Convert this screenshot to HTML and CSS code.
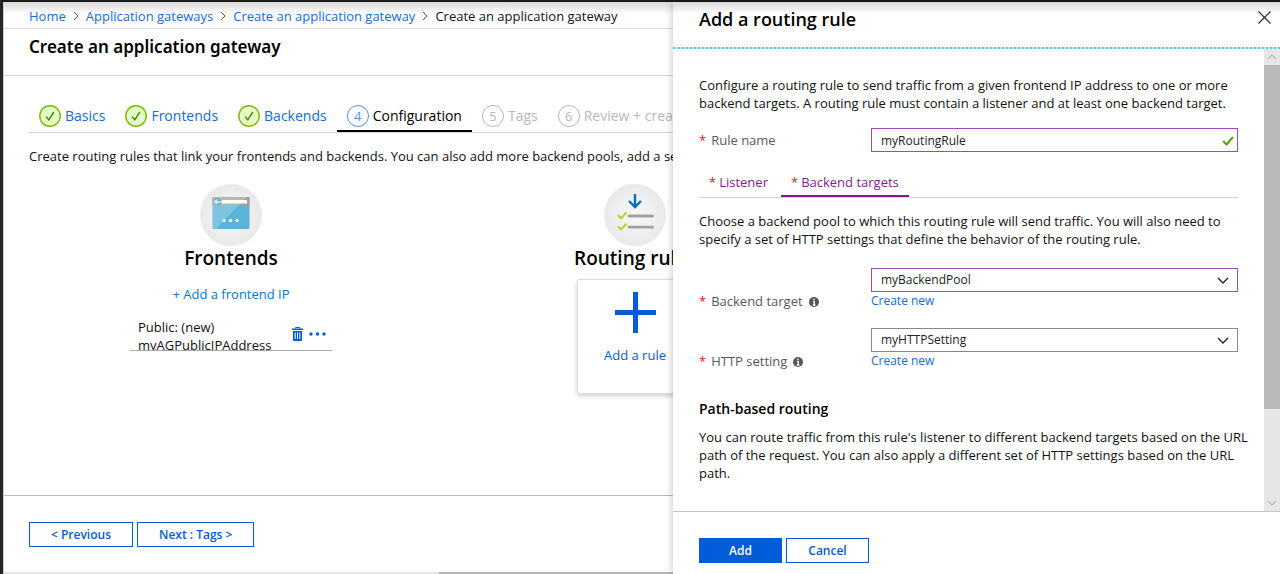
FILE: index.html
```html
<!DOCTYPE html>
<html lang="en">
<head>
<meta charset="utf-8">
<title>Create an application gateway</title>
<link rel="stylesheet" href="styles.css">
</head>
<body>
<div class="portal">
  <main class="blade">
    <nav class="breadcrumb" aria-label="Breadcrumb">
      <a href="#">Home</a>
      <svg class="crumb-sep" viewBox="0 0 6 10"><path d="M1 1l4 4-4 4"/></svg>
      <a href="#">Application gateways</a>
      <svg class="crumb-sep" viewBox="0 0 6 10"><path d="M1 1l4 4-4 4"/></svg>
      <a href="#">Create an application gateway</a>
      <svg class="crumb-sep" viewBox="0 0 6 10"><path d="M1 1l4 4-4 4"/></svg>
      <span>Create an application gateway</span>
    </nav>
    <header class="blade-header"><h1>Create an application gateway</h1></header>

    <div class="blade-body">
      <div class="steps">
        <a class="step done" href="#"><svg class="step-icon" viewBox="0 0 22 22"><circle cx="11" cy="11" r="10.2"/><path d="M7 11.6l2.8 3.2L14.8 7"/></svg>Basics</a>
        <a class="step done" href="#"><svg class="step-icon" viewBox="0 0 22 22"><circle cx="11" cy="11" r="10.2"/><path d="M7 11.6l2.8 3.2L14.8 7"/></svg>Frontends</a>
        <a class="step done" href="#"><svg class="step-icon" viewBox="0 0 22 22"><circle cx="11" cy="11" r="10.2"/><path d="M7 11.6l2.8 3.2L14.8 7"/></svg>Backends</a>
        <a class="step active" href="#"><span class="step-num">4</span>Configuration</a>
        <a class="step later" href="#"><span class="step-num">5</span>Tags</a>
        <a class="step later" href="#"><span class="step-num">6</span>Review + create</a>
      </div>
      <p class="intro">Create routing rules that link your frontends and backends. You can also add more backend pools, add a second</p>

      <div class="columns">
        <section class="column">
          <svg class="column-icon" viewBox="0 0 62 62">
            <defs><radialGradient id="disc"><stop offset="0" stop-color="#f8f8f8"/><stop offset="1" stop-color="#e9e9e9"/></radialGradient></defs>
            <circle cx="31" cy="31" r="31" fill="url(#disc)"/>
            <rect x="12.500" y="13" width="37" height="32" rx="1" fill="#59b4d9"/>
            <path d="M12.500 14q0-1 1-1h35q1 0 1 1v8h-37z" fill="#a0a1a2"/>
            <path d="M12.500 14q0-1 1-1h33L16 45h-2.500q-1 0-1-1z" fill="#fff" opacity=".22"/>
            <rect x="21.500" y="16" width="25.500" height="3.500" fill="#fff"/>
            <circle cx="17.500" cy="17.800" r="3.600" fill="#59b4d9"/>
            <path d="M20.500 17.800h-5.500M17 15.600l-2.200 2.200 2.200 2.200" fill="none" stroke="#fff" stroke-width="1.200"/>
            <circle cx="24" cy="36.500" r="1.600" fill="#fff"/><circle cx="30.500" cy="36.500" r="1.600" fill="#fff"/><circle cx="37" cy="36.500" r="1.600" fill="#fff"/>
          </svg>
          <h2>Frontends</h2>
          <a class="add-link" href="#">+ Add a frontend IP</a>
          <div class="item">
            <div class="item-name">Public: (new)<br>myAGPublicIPAddress</div>
            <button class="icon-button" type="button" aria-label="Delete">
              <svg width="11" height="14" viewBox="0 0 11 14"><path d="M3.500 1.500V.5h4v1" fill="none" stroke="#015cda"/><path d="M0 1.500h11v1.500H0zM1 4h9v9q0 1-1 1H2q-1 0-1-1z" fill="#015cda"/><path d="M3.200 5.500v6.500M5.500 5.500v6.500M7.800 5.500v6.500" stroke="#fff"/></svg>
            </button>
            <button class="icon-button" type="button" aria-label="More">
              <svg width="17" height="4" viewBox="0 0 17 4" fill="#015cda"><circle cx="2" cy="2" r="1.700"/><circle cx="8.500" cy="2" r="1.700"/><circle cx="15" cy="2" r="1.700"/></svg>
            </button>
          </div>
        </section>
        <section class="column">
          <svg class="column-icon" viewBox="0 0 62 62">
            <circle cx="31" cy="31" r="31" fill="url(#disc)"/>
            <path d="M31 10v13M25 17l6 6 6-6" fill="none" stroke="#0072c6" stroke-width="2.400"/>
            <path d="M25 32h23.500M25 43.200h23.500" stroke="#a0a1a2" stroke-width="2.800" stroke-linecap="round"/>
            <path d="M14 31l3 3.200 5.500-5.700M14 42.200l3 3.200 5.500-5.700" fill="none" stroke="#b8d432" stroke-width="2"/>
          </svg>
          <h2>Routing rules</h2>
          <button class="rule-card" type="button">
            <svg width="41" height="41" viewBox="0 0 41 41"><path d="M20.500 0v41M0 20.500h41" stroke="#015cda" stroke-width="5"/></svg>
            Add a rule
          </button>
        </section>
      </div>
    </div>

    <footer class="blade-footer">
      <button class="button" type="button">&lt; Previous</button>
      <button class="button" type="button">Next : Tags &gt;</button>
    </footer>
    <div class="hscroll"><div class="hscroll-thumb"></div></div>
  </main>

  <aside class="panel">
    <header class="panel-header">
      <h2>Add a routing rule</h2>
      <button class="icon-button" type="button" aria-label="Close"><svg width="13" height="13" viewBox="0 0 13 13"><path d="M.5.5l12 12M12.500.5l-12 12" stroke="#333" stroke-width="1.200"/></svg></button>
    </header>
    <div class="panel-scroll">
      <form class="panel-body">
        <p>Configure a routing rule to send traffic from a given frontend IP address to one or more backend targets. A routing rule must contain a listener and at least one backend target.</p>
        <div class="field name-field">
          <label for="rule-name"><span class="req">*</span>Rule name</label>
          <div class="control">
            <input id="rule-name" class="box changed" type="text" value="myRoutingRule">
            <svg class="valid" viewBox="0 0 12 10"><path d="M1 5l3.500 3.500L11 1"/></svg>
          </div>
        </div>
        <div class="tabs">
          <button class="tab" type="button"><span class="req">*</span>Listener</button>
          <button class="tab selected" type="button"><span class="req">*</span>Backend targets</button>
        </div>
        <p>Choose a backend pool to which this routing rule will send traffic. You will also need to specify a set of HTTP settings that define the behavior of the routing rule.</p>
        <div class="field first-select">
          <label for="target"><span class="req">*</span>Backend target<svg class="info" viewBox="0 0 10 10"><circle cx="5" cy="5" r="5"/><path d="M5 1.500v1.500M4 4.500h1.200v3.500M3.800 8h2.600"/></svg></label>
          <div class="control">
            <select id="target" class="box changed"><option>myBackendPool</option></select>
            <svg class="chevron" viewBox="0 0 12 7"><path d="M1 1l5 5 5-5"/></svg>
            <a href="#">Create new</a>
          </div>
        </div>
        <div class="field">
          <label for="setting"><span class="req">*</span>HTTP setting<svg class="info" viewBox="0 0 10 10"><circle cx="5" cy="5" r="5"/><path d="M5 1.500v1.500M4 4.500h1.200v3.500M3.800 8h2.600"/></svg></label>
          <div class="control">
            <select id="setting" class="box"><option>myHTTPSetting</option></select>
            <svg class="chevron" viewBox="0 0 12 7"><path d="M1 1l5 5 5-5"/></svg>
            <a href="#">Create new</a>
          </div>
        </div>
        <h3>Path-based routing</h3>
        <p>You can route traffic from this rule's listener to different backend targets based on the URL path of the request. You can also apply a different set of HTTP settings based on the URL path.</p>
      </form>
      <div class="vscroll">
        <svg class="vscroll-arrow up" viewBox="0 0 16 16"><path d="M4 10l4-4 4 4"/></svg>
        <div class="vscroll-thumb"></div>
        <svg class="vscroll-arrow" viewBox="0 0 16 16"><path d="M4 6l4 4 4-4"/></svg>
      </div>
    </div>
    <footer class="panel-footer">
      <button class="button primary" type="button">Add</button>
      <button class="button" type="button">Cancel</button>
    </footer>
  </aside>
</div>
</body>
</html>
```
FILE: styles.css
```css
* { box-sizing: border-box; }
body {
  margin: 0;
  font: 13px/18px "Open Sans", "Noto Sans", sans-serif;
  color: #111;
  background: #fff;
}
h1, h2, h3, p { margin: 0; font-weight: 600; }
p { font-weight: 400; }
a { color: #136bdd; text-decoration: none; }
button, input, select { font: inherit; color: inherit; }
button { cursor: pointer; }
.portal {
  display: flex;
  height: 100vh;
  border-top: 2px solid #1b1a19;
  border-left: 3px solid #252423;
}

.blade {
  flex: 1;
  min-width: 0;
  display: flex;
  flex-direction: column;
  overflow: hidden;
  white-space: nowrap;
  border-left: 1px solid #ccc;
}
.breadcrumb {
  display: flex;
  align-items: center;
  gap: 7px;
  height: 27px;
  padding: 2px 0 0 25px;
  border-bottom: 1px solid #ddd;
  background: linear-gradient(#d8d8d8, #fff 12px);
}
.crumb-sep { width: 6px; height: 10px; fill: none; stroke: #555; flex: none; }
.blade-header {
  height: 47px;
  padding: 6px 25px;
  border-bottom: 1px solid #d4d4d4;
}
h1 { font-family: "Noto Sans", sans-serif; font-size: 17px; line-height: 24px; color: #000; }
.blade-body { flex: 1; padding: 22px 0 0 25px; min-height: 0; }
.steps {
  display: flex;
  height: 35px;
  border-bottom: 1px solid #d4d4d4;
}
.step {
  display: flex;
  align-items: center;
  gap: 4px;
  padding: 3px 10px 0;
  height: 34px;
  border-bottom: 2px solid transparent;
  font-size: 14px;
}
.step-icon, .step-num { width: 22px; height: 22px; flex: none; }
.step-icon circle { fill: #e4ffc7; stroke: #7fba00; stroke-width: 1.400; }
.step-icon path { fill: none; stroke: #498205; stroke-width: 1.400; }
.step-num {
  border: 1px solid;
  border-radius: 50%;
  text-align: center;
  line-height: 20px;
  font-size: 13px;
}
.step.active { color: #000; border-color: #000; }
.step.active .step-num { color: #4b92f7; }
.step.later { color: #b8b8b8; }
.intro { margin-top: 14px; }
.columns {
  display: grid;
  grid-template-columns: repeat(2, 404px);
  margin-top: 19px;
}
.column { display: flex; flex-direction: column; align-items: center; }
.column-icon { width: 62px; height: 62px; }
.column h2 { font-size: 19px; line-height: 24px; color: #000; }
.add-link { margin-top: 15px; color: #0078d4; }
.item {
  display: flex;
  align-items: center;
  gap: 6px;
  width: 202px;
  height: 33px;
  margin-top: 15px;
  padding: 0 6px 0 8px;
  border-bottom: 1px solid #aaa;
  overflow: hidden;
}
.item-name { flex: 1; align-self: flex-start; }
.icon-button { display: flex; padding: 0; border: 0; background: none; }
.rule-card {
  display: flex;
  flex-direction: column;
  align-items: center;
  gap: 13px;
  width: 117px;
  height: 115px;
  margin-top: 9px;
  padding: 12px 0 0;
  border: 1px solid #ddd;
  border-radius: 3px;
  background: #fff;
  box-shadow: 0 2px 5px rgba(0, 0, 0, .2);
  color: #015cda;
}
.blade-footer {
  display: flex;
  align-items: flex-start;
  gap: 4px;
  height: 77px;
  padding: 26px 25px 0;
  border-top: 1px solid #bbb;
}
.button {
  height: 25px;
  min-width: 83px;
  padding: 0 21px;
  border: 1px solid #015cda;
  background: #fff;
  color: #015cda;
  font-size: 12px;
  font-weight: 600;
}
.button.primary { background: #015cda; color: #fff; }
.hscroll { height: 2px; background: #e4e4e4; }
.hscroll-thumb { width: 35%; height: 2px; margin-left: auto; background: #b5b5b5; }

.panel {
  flex: none;
  width: 607px;
  display: flex;
  flex-direction: column;
  background: #fff;
  box-shadow: 0 0 8px rgba(0, 0, 0, .25);
}
.panel-header {
  display: flex;
  justify-content: space-between;
  align-items: flex-start;
  height: 47px;
  padding: 5px 9px 0 26px;
  border-bottom: 2px dotted #4fd0f7;
  background: linear-gradient(#d8d8d8, #fff 12px);
}
.panel-header h2 { font-size: 18px; line-height: 24px; color: #000; }
.panel-header .icon-button { margin-top: 4px; }
.panel-scroll { flex: 1; min-height: 0; display: flex; }
.panel-body { flex: 1; padding: 27px 26px 0; }
.panel-body p { margin-right: -12px; }
.field { display: flex; margin-top: 18px; }
.first-select { margin-top: 20px; }
.field label { display: flex; align-items: center; width: 172px; height: 18px; margin-top: 24px; color: #595959; }
.req { color: #e81123; margin-right: 5px; }
.control { position: relative; flex: 1; display: flex; flex-direction: column; font-size: 12px; }
.box {
  width: 100%;
  height: 24px;
  padding: 0 9px;
  border: 1px solid #8a8886;
  border-radius: 0;
  appearance: none;
  background: #fff;
  color: #222;
}
.changed { border-color: #a04bb5; }
.valid { position: absolute; right: 4px; top: 8px; width: 12px; height: 10px; fill: none; stroke: #57a300; stroke-width: 2; }
.chevron { position: absolute; right: 9px; top: 9px; width: 12px; height: 7px; fill: none; stroke: #222; stroke-width: 1.400; }
.info { width: 10px; height: 10px; margin: 2px 0 0 6px; fill: #555; }
.info path { fill: none; stroke: #fff; stroke-width: 1.300; }
.name-field { margin-top: 16px; }
.name-field label { margin-top: 3px; }
.tabs {
  display: flex;
  gap: 3px;
  height: 31px;
  margin: 15px 0 14px;
  border-bottom: 1px solid #d4d4d4;
}
.tab {
  height: 30px;
  padding: 1px 10px 0;
  border: 0;
  border-bottom: 2px solid transparent;
  background: none;
  color: #881798;
}
.tab .req { margin-right: 3px; }
.tab.selected { border-color: #881798; }
h3 { margin: 30px 0 10px; font-size: 14px; color: #000; }
.vscroll { display: flex; flex-direction: column; width: 16px; background: #e6e6e6; }
.vscroll-arrow { width: 16px; height: 16px; flex: none; fill: none; stroke: #999; }
.vscroll-thumb { height: 344px; margin-bottom: auto; background: #b9b9b9; }
.panel-footer {
  display: flex;
  gap: 4px;
  height: 63px;
  padding: 26px 26px 0;
  border-top: 1px solid #c4c4c4;
}
```
